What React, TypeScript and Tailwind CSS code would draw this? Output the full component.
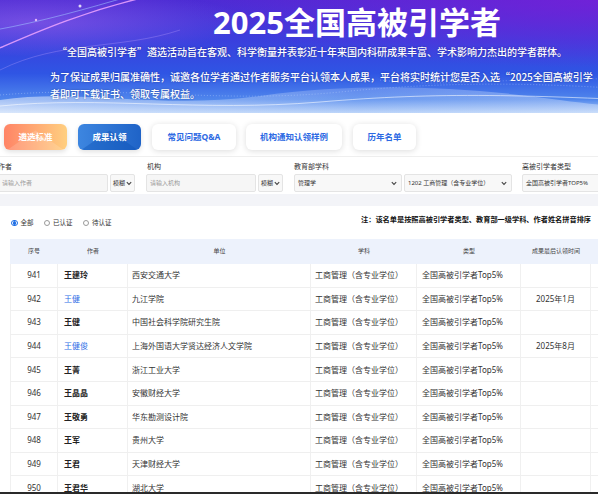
import React from 'react';

const rows = [
  { n: 941, a: '王建玲', link: false, u: '西安交通大学', t: '' },
  { n: 942, a: '王健', link: true, u: '九江学院', t: '2025年1月' },
  { n: 943, a: '王健', link: false, u: '中国社会科学院研究生院', t: '' },
  { n: 944, a: '王健俊', link: true, u: '上海外国语大学贤达经济人文学院', t: '2025年8月' },
  { n: 945, a: '王菁', link: false, u: '浙江工业大学', t: '' },
  { n: 946, a: '王晶晶', link: false, u: '安徽财经大学', t: '' },
  { n: 947, a: '王敬勇', link: false, u: '华东勘测设计院', t: '' },
  { n: 948, a: '王军', link: false, u: '贵州大学', t: '' },
  { n: 949, a: '王君', link: false, u: '天津财经大学', t: '' },
  { n: 950, a: '王君华', link: false, u: '湖北大学', t: '' },
];

function Chevron() {
  return (
    <svg width="6" height="5" viewBox="0 0 6 5" className="shrink-0">
      <path d="M0.8 1.2l2.2 2.2L5.2 1.2" fill="none" stroke="#444" strokeWidth="1.1" />
    </svg>
  );
}

function Select({ w, text, tight }: { w: string; text: string; tight?: boolean }) {
  return (
    <div
      className={`${w} flex h-[18px] items-center justify-between whitespace-nowrap rounded-[2px] border border-[#e4e4e4] bg-[#f8f8f8] ${
        tight ? 'pl-[2px] pr-[2px]' : 'pl-[3px] pr-[4px]'
      } text-[6px] text-[#333]`}
    >
      <span>{text}</span>
      <Chevron />
    </div>
  );
}

function Input({ ph }: { ph: string }) {
  return (
    <div className="flex h-[18px] w-[110px] items-center rounded-[2px] border border-[#e4e4e4] bg-[#f6f6f6] pl-[3px] text-[6px] text-[#9a9a9a]">
      {ph}
    </div>
  );
}

function Radio({ checked, label }: { checked?: boolean; label: string }) {
  return (
    <div className="flex items-center gap-[3px]">
      <span
        className={`flex h-[6.5px] w-[6.5px] items-center justify-center rounded-full border ${
          checked ? 'border-[#1f6fe5]' : 'border-[#9a9a9a]'
        } bg-white`}
      >
        {checked && <span className="h-[3.5px] w-[3.5px] rounded-full bg-[#1f6fe5]" />}
      </span>
      <span className="text-[6.5px] text-[#333]">{label}</span>
    </div>
  );
}

const cols = ['w-[48px]', 'w-[70px]', 'w-[183px]', 'w-[106px]', 'w-[104px]', 'w-[70px]', 'w-[120px]'];

export default function App() {
  return (
    <div className="relative h-[494px] w-[598px] overflow-hidden bg-white font-['Noto_Sans','Noto_Sans_CJK_SC',sans-serif]">
      <div className="w-[714px]">
        {/* Banner */}
        <div className="relative h-[113px] w-[714px] overflow-hidden bg-[linear-gradient(180deg,#4b2bd3_0%,#3a3fdd_35%,#2f55e4_65%,#4f86ec_88%,#b5d0f8_100%)]">
          <svg className="absolute inset-0" width="714" height="113" viewBox="0 0 714 113">
            <defs>
              <radialGradient id="pr" cx="0.85" cy="0" r="0.6">
                <stop offset="0" stopColor="#7a1fd9" stopOpacity="0.8" />
                <stop offset="1" stopColor="#7a1fd9" stopOpacity="0" />
              </radialGradient>
              <radialGradient id="pl" cx="0.05" cy="0.2" r="0.3">
                <stop offset="0" stopColor="#b36cf0" stopOpacity="0.45" />
                <stop offset="1" stopColor="#b36cf0" stopOpacity="0" />
              </radialGradient>
              <linearGradient id="wv" x1="0" y1="0" x2="1" y2="0">
                <stop offset="0" stopColor="#ffffff" stopOpacity="0.7" />
                <stop offset="0.5" stopColor="#dbe9ff" stopOpacity="0.3" />
                <stop offset="1" stopColor="#ffffff" stopOpacity="0.6" />
              </linearGradient>
            </defs>
            <rect width="714" height="113" fill="url(#pr)" />
            <rect width="714" height="113" fill="url(#pl)" />
            <path d="M-5 50 C30 35 80 12 150 -4" fill="none" stroke="#f0a6ff" strokeWidth="1.4" opacity="0.85" />
            <path d="M-5 30 C40 22 90 8 130 -4" fill="none" stroke="#9fc4ff" strokeWidth="0.8" opacity="0.7" />
            <path d="M0 70 C60 40 120 50 180 30" fill="none" stroke="#c6a8ff" strokeWidth="0.6" opacity="0.5" />
            <circle cx="80" cy="6" r="1.5" fill="#fff" opacity="0.8" />
            <circle cx="36" cy="20" r="1.2" fill="#ffd0ff" opacity="0.8" />
            <path d="M0 100 C80 88 160 110 260 96 S460 86 560 100 S680 104 714 94 L714 113 L0 113 Z" fill="url(#wv)" opacity="0.7" />
            <path d="M0 106 C100 96 200 112 320 102 S520 94 714 104" fill="none" stroke="#ffffff" strokeWidth="0.8" opacity="0.7" />
            <path d="M0 95 C120 85 220 104 340 92 S560 82 714 96" fill="none" stroke="#cfe2ff" strokeWidth="0.6" opacity="0.6" strokeDasharray="1 2" />
            <path d="M380 80 C460 90 540 70 714 84" fill="none" stroke="#cfe2ff" strokeWidth="0.6" opacity="0.5" strokeDasharray="1 2" />
          </svg>
          <div className="relative font-['Noto_Sans_CJK_SC',sans-serif]">
            <h1 className="pt-[3px] text-center font-['Noto_Sans','Noto_Sans_CJK_SC',sans-serif] text-[31px] font-bold leading-[38px] text-white">
              2025全国高被引学者
            </h1>
            <p className="ml-[57px] mt-[4px] text-[10px] font-medium leading-[14px] text-white [text-shadow:0_0_2px_rgba(0,0,40,0.4)]">
              “全国高被引学者”遴选活动旨在客观、科学衡量并表彰近十年来国内科研成果丰富、学术影响力杰出的学者群体。
            </p>
            <p className="ml-[50px] mt-[9px] w-[548px] text-[10px] font-medium leading-[17px] text-white [text-shadow:0_0_2px_rgba(0,0,40,0.4)]">
              为了保证成果归属准确性，诚邀各位学者通过作者服务平台认领本人成果，平台将实时统计您是否入选“2025全国高被引学者即可下载证书、领取专属权益。
            </p>
          </div>
        </div>

        {/* Buttons */}
        <div className="flex gap-[11px] pl-[4px] pt-[11px]">
          <div className="relative flex h-[26px] w-[63px] items-center justify-center overflow-hidden rounded-[6px] bg-[linear-gradient(90deg,#ff8466,#ffcf80)] text-[8.5px] font-bold text-white shadow-[0_2px_5px_rgba(0,0,0,0.12)]">
            <span className="absolute inset-0 bg-white/15 [clip-path:polygon(50%_25%,95%_100%,5%_100%)]" />
            <span className="relative">遴选标准</span>
          </div>
          <div className="relative flex h-[26px] w-[63px] items-center justify-center overflow-hidden rounded-[6px] bg-[linear-gradient(90deg,#3d86e0,#1f63c7)] text-[8.5px] font-bold text-white shadow-[0_2px_5px_rgba(0,0,0,0.12)]">
            <span className="absolute inset-0 bg-[#0b4fb5]/40 [clip-path:polygon(50%_25%,95%_100%,5%_100%)]" />
            <span className="relative">成果认领</span>
          </div>
          <div className="flex h-[26px] w-[84px] items-center justify-center rounded-[6px] bg-white text-[8.5px] font-bold text-[#2c69e3] shadow-[0_1px_6px_rgba(0,0,0,0.14)]">
            常见问题Q&amp;A
          </div>
          <div className="ml-[-1px] flex h-[26px] w-[96px] items-center justify-center rounded-[6px] bg-white text-[8.5px] font-bold text-[#2c69e3] shadow-[0_1px_6px_rgba(0,0,0,0.14)]">
            机构通知认领样例
          </div>
          <div className="flex h-[26px] w-[63px] items-center justify-center rounded-[6px] bg-white text-[8.5px] font-bold text-[#2c69e3] shadow-[0_1px_6px_rgba(0,0,0,0.14)]">
            历年名单
          </div>
        </div>

        {/* Filters */}
        <div className="mt-[6px] border-t border-[#efefef]">
          <div className="ml-[-2px] flex gap-[11px] pb-[2px] pt-[5px]">
            <div className="flex flex-col gap-[2px]">
              <span className="text-[7px] leading-[10px] text-[#333]">作者</span>
              <div className="flex gap-[2px]">
                <Input ph="请输入作者" />
                <Select w="w-[25px]" text="模糊" tight />
              </div>
            </div>
            <div className="flex flex-col gap-[2px]">
              <span className="pl-[1px] text-[7px] leading-[10px] text-[#333]">机构</span>
              <div className="flex gap-[2px]">
                <Input ph="请输入机构" />
                <Select w="w-[25px]" text="模糊" tight />
              </div>
            </div>
            <div className="flex flex-col gap-[2px]">
              <span className="text-[7px] leading-[10px] text-[#333]">教育部学科</span>
              <div className="flex gap-[2px]">
                <Select w="w-[108px]" text="管理学" />
                <Select w="w-[108px]" text="1202 工商管理（含专业学位）" />
              </div>
            </div>
            <div className="ml-[-1px] flex flex-col gap-[2px]">
              <span className="text-[7px] leading-[10px] text-[#333]">高被引学者类型</span>
              <Select w="w-[108px]" text="全国高被引学者TOP5%" />
            </div>
          </div>
        </div>

        <div className="h-[12px] bg-[#f3f4f8]" />

        {/* Card */}
        <div className="bg-white">
          <div className="flex h-[33px] items-center pl-[11px]">
            <div className="flex w-[350px] items-center gap-[10px] pt-[1px]">
              <Radio checked label="全部" />
              <Radio label="已认证" />
              <Radio label="待认证" />
            </div>
            <div className="mt-[-6px] whitespace-nowrap text-[7.2px] font-bold text-[#111]">
              注：该名单是按照高被引学者类型、教育部一级学科、作者姓名拼音排序
            </div>
          </div>

          <div className="ml-[10px]">
            <div className="flex h-[25px] items-center bg-[#edf2fc] text-[6px] text-[#444]">
              {['序号', '作者', '单位', '学科', '类型', '成果最后认领时间', ''].map((h, i) => (
                <div key={i} className={`${cols[i]} text-center`}>
                  {h}
                </div>
              ))}
            </div>
            {rows.map((r) => (
              <div key={r.n} className="flex h-[23.6px] border-b border-[#efefef] text-[8px] text-[#333]">
                <div className={`${cols[0]} flex items-center justify-center border-x border-[#f0f0f0]`}>{r.n}</div>
                <div
                  className={`${cols[1]} flex items-center border-r border-[#f0f0f0] pl-[6px] ${
                    r.link ? 'text-[#2f6fe6]' : 'font-bold text-[#222]'
                  }`}
                >
                  {r.a}
                </div>
                <div className={`${cols[2]} flex items-center border-r border-[#f0f0f0] pl-[4px]`}>{r.u}</div>
                <div className={`${cols[3]} flex items-center border-r border-[#f0f0f0] pl-[4px]`}>工商管理（含专业学位）</div>
                <div className={`${cols[4]} flex items-center border-r border-[#f0f0f0] pl-[5px]`}>全国高被引学者Top5%</div>
                <div className={`${cols[5]} flex items-center justify-center border-r border-[#f0f0f0]`}>{r.t}</div>
                <div className={`${cols[6]} border-r border-[#f0f0f0]`} />
              </div>
            ))}
          </div>
        </div>
      </div>
      <div className="absolute bottom-0 left-0 h-[2px] w-full bg-[#2a2a2a]" />
    </div>
  );
}
